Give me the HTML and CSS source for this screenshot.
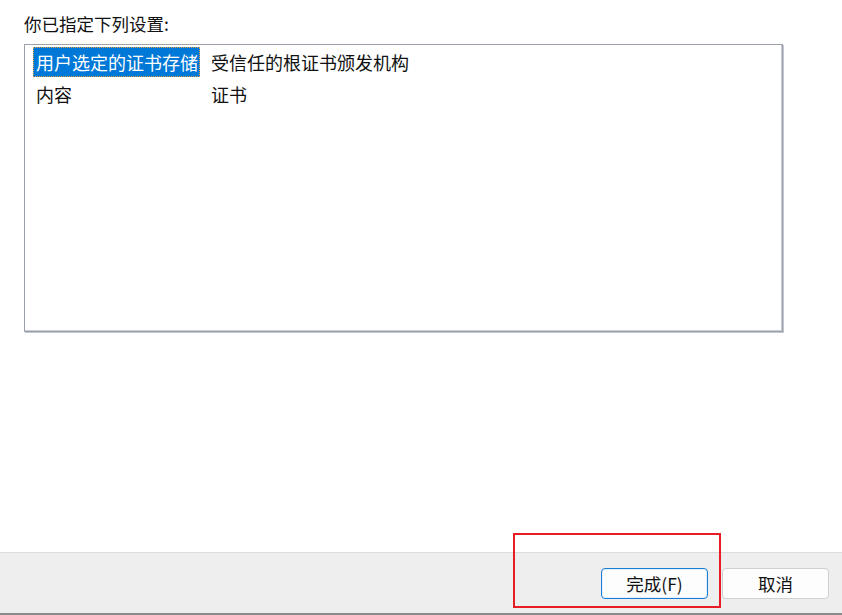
FILE: index.html
```html
<!DOCTYPE html>
<html lang="zh-CN">
<head>
<meta charset="utf-8">
<title>证书导入向导</title>
<link rel="stylesheet" href="styles.css">
</head>
<body>
<div class="page">
  <main class="content">
    <div class="label">你已指定下列设置:</div>
    <div class="listbox">
      <div class="row">
        <div class="cell key"><span class="selected">用户选定的证书存储</span></div>
        <div class="cell val">受信任的根证书颁发机构</div>
      </div>
      <div class="row">
        <div class="cell key"><span class="plain">内容</span></div>
        <div class="cell val">证书</div>
      </div>
    </div>
  </main>
  <footer class="footer">
    <button class="btn primary">完成(F)</button>
    <button class="btn">取消</button>
    <div class="annotation"></div>
  </footer>
</div>
</body>
</html>
```

FILE: styles.css
```css
* { box-sizing: border-box; }
html, body {
  margin: 0;
  padding: 0;
  background: #ffffff;
}
body {
  font-family: "Noto Sans CJK SC", "Noto Sans", sans-serif;
  font-size: 18px;
  color: #111111;
  width: 842px;
  height: 615px;
  overflow: hidden;
}
.page {
  display: flex;
  flex-direction: column;
  height: 615px;
}
.content {
  flex: 1;
  padding: 10px 59px 0 24px;
}
.label {
  height: 34px;
  line-height: 28px;
  font-size: 17.5px;
}
.listbox {
  width: 759px;
  height: 288px;
  border: 1px solid #9ca2ab;
  box-shadow: inset -1px -1px 0 #c9cdd3, 1px 1px 0 #c4c8ce;
  padding: 2px 0 0 8px;
  background: #ffffff;
}
.row {
  display: flex;
  height: 32px;
  align-items: flex-start;
}
.cell {
  line-height: 30px;
  height: 30px;
  white-space: nowrap;
}
.key {
  width: 178px;
}
.selected, .plain {
  display: inline-block;
  height: 30px;
  line-height: 30px;
  padding: 0 2px 0 3px;
}
.selected {
  background: #0078d7;
  color: #ffffff;
  outline: 1px dotted #e0a040;
  outline-offset: -1px;
}
.footer {
  position: relative;
  height: 63px;
  background: #eeeeee;
  border-top: 1px solid #dcdcdc;
  border-bottom: 2px solid #8c8c8c;
  display: flex;
  justify-content: flex-end;
  align-items: flex-start;
  gap: 14px;
  padding: 15px 13px 0 0;
}
.btn {
  width: 107px;
  height: 31px;
  font-family: inherit;
  font-size: 17.5px;
  color: #111111;
  background: #fdfdfd;
  border: 1px solid #d0d0d0;
  border-radius: 4px;
  padding: 0;
  line-height: 29px;
}
.btn.primary {
  border: 1px solid #1a7fd4;
  box-shadow: inset 0 0 0 1px #e4f0fb;
}
.annotation {
  position: absolute;
  left: 513px;
  top: -20px;
  width: 208px;
  height: 75px;
  border: 2px solid #e81c24;
  pointer-events: none;
}
```
